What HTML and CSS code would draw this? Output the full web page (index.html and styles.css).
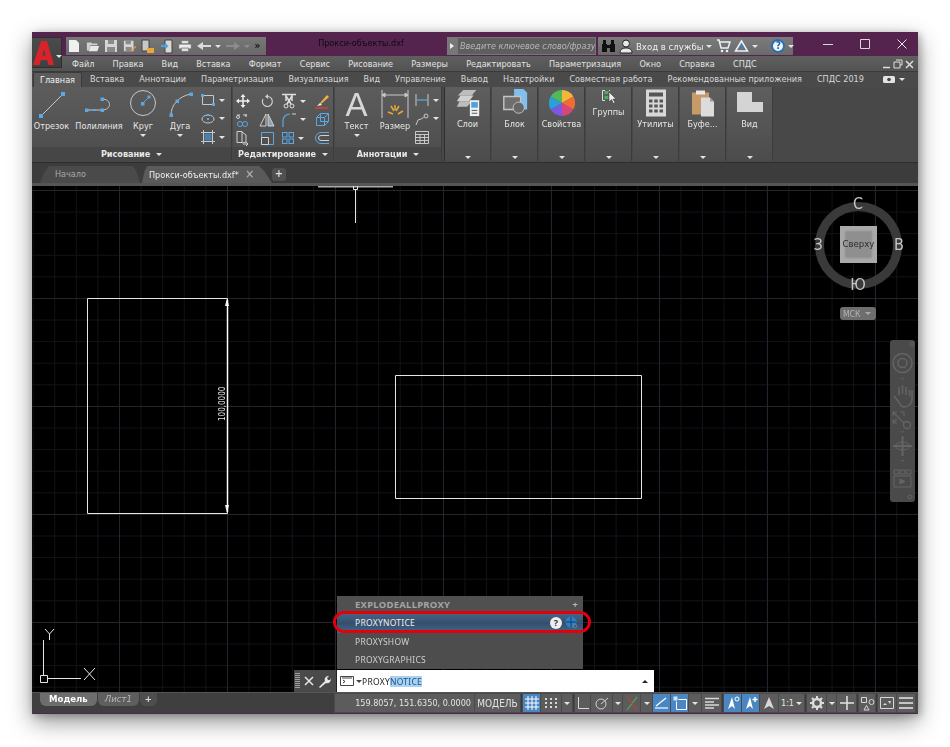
FILE: index.html
```html
<!DOCTYPE html>
<html lang="ru">
<head>
<meta charset="utf-8">
<title>Прокси-объекты.dxf</title>
<link rel="stylesheet" href="styles.css">
</head>
<body>
<div class="window">
  <header class="titlebar">
    <div class="logo">
      <svg width="22" height="26" viewBox="0 0 22 26"><path d="M0 25 L8 1 H14 L21 25 H15.5 L14 20 H8 L6.500 25 Z M9.500 15.500 H12.500 L11 9 Z" fill="#d8232a" fill-rule="evenodd"/></svg>
      <i class="caret caret-light"></i>
    </div>
    <div class="qat">
      <svg width="14" height="14" viewBox="0 0 14 14"><path d="M2 1h7l3 3v9H2z" fill="#f0f0f0"/></svg>
      <svg width="14" height="14" viewBox="0 0 16 14"><path d="M1 3h5l1 1h6v2H5L3 12H1z" fill="#cfcfcf"/><path d="M5 7h10l-2 6H3z" fill="#e8e8e8"/></svg>
      <svg width="14" height="14" viewBox="0 0 14 14"><path d="M1 1h12v12H1z" fill="#d5d5d5"/><path d="M4 1h6v4H4zM3 8h8v5H3z" fill="#8a8a8a"/></svg>
      <svg width="14" height="14" viewBox="0 0 16 14"><path d="M1 1h11v12H1z" fill="#d5d5d5"/><path d="M3 1h6v4H3zM3 8h7v5H3z" fill="#8a8a8a"/><path d="M9 12l5-5 1 1-5 5z" fill="#f0a030"/></svg>
      <svg width="14" height="15" viewBox="0 0 14 15"><path d="M1 1h7v11H1z" fill="#c8c8c8" stroke="#444"/><path d="M6 9h7v5H6z" fill="#e8a838"/></svg>
      <svg width="14" height="15" viewBox="0 0 14 15"><path d="M5 1h7v13H5z" fill="#d8d8d8" stroke="#444"/><path d="M1 7h6M5 5l2 2-2 2" stroke="#4ea1de" stroke-width="2" fill="none"/></svg>
      <svg width="14" height="14" viewBox="0 0 16 14"><path d="M4 1h8v3H4zM1 5h14v5H1zM4 9h8v4H4z" fill="#ececec" stroke="#666" stroke-width=".5"/></svg>
      <svg width="14" height="10" viewBox="0 0 14 10"><path d="M0 5l6-4v3h8v2H6v3z" fill="#dcdcdc"/></svg>
      <i class="caret caret-light"></i>
      <svg width="14" height="10" viewBox="0 0 14 10"><path d="M14 5L8 1v3H0v2h8v3z" fill="#8d8d8d"/></svg>
      <i class="caret caret-dim"></i>
      <span class="more">»</span>
    </div>
    <div class="doc-title">Прокси-объекты.dxf</div>
    <div class="search-arrow"><i class="tri-right"></i></div>
    <div class="search">Введите ключевое слово/фразу</div>
    <div class="tools">
      <svg width="15" height="14" viewBox="0 0 15 14"><path d="M1 5h5v8H1zM9 5h5v8H9zM2 1h3v4H2zM10 1h3v4h-3zM6 6h3v3H6z" fill="#111"/></svg>
      <svg width="14" height="15" viewBox="0 0 14 15"><circle cx="7" cy="4.500" r="3.500" fill="#e8e8e8" stroke="#222"/><path d="M1 14c0-4 3-5 6-5s6 1 6 5z" fill="#e8e8e8" stroke="#222"/></svg>
      <span class="login">Вход в службы</span><i class="caret caret-light"></i>
      <svg class="cart" width="15" height="14" viewBox="0 0 15 14"><path d="M1 1h2l2 8h7l2-6H4" fill="none" stroke="#e8f2fa" stroke-width="1.500"/><circle cx="6" cy="12" r="1.300" fill="#e8f2fa"/><circle cx="11" cy="12" r="1.300" fill="#e8f2fa"/></svg>
      <svg width="15" height="14" viewBox="0 0 15 14"><path d="M7.500 2L1.500 12h12z" fill="none" stroke="#eaf2fa" stroke-width="1.500"/><circle cx="7.500" cy="8" r="2" fill="#3f7fc0"/></svg>
      <i class="caret caret-light"></i>
      <span class="tools-sep"></span>
      <span class="help">?</span><i class="caret caret-light"></i>
    </div>
    <div class="winbtns">
      <svg width="12" height="12" viewBox="0 0 12 12"><path d="M1 6.500h10" stroke="#d8d8d8"/></svg>
      <svg width="12" height="12" viewBox="0 0 12 12"><path d="M1.500 1.500h9v9h-9z" fill="none" stroke="#d8d8d8" stroke-width="1"/></svg>
      <svg width="12" height="12" viewBox="0 0 12 12"><path d="M1.500 1.500l9 9M10.500 1.500l-9 9" stroke="#e8e8e8" stroke-width="1"/></svg>
    </div>
  </header>

  <nav class="menubar">
    <span>Файл</span><span>Правка</span><span>Вид</span><span>Вставка</span><span>Формат</span><span>Сервис</span><span>Рисование</span><span>Размеры</span><span>Редактировать</span><span>Параметризация</span><span>Окно</span><span>Справка</span><span>СПДС</span>
    <div class="mdi">
      <svg width="9" height="9" viewBox="0 0 9 9"><path d="M1 7.500h7" stroke="#ddd" stroke-width="1.500"/></svg>
      <svg width="10" height="10" viewBox="0 0 10 10"><path d="M3 1h6v5H7M1 3h6v6H1z" fill="none" stroke="#ddd"/></svg>
      <svg width="9" height="9" viewBox="0 0 9 9"><path d="M1 1l7 7M8 1L1 8" stroke="#ddd" stroke-width="1.500"/></svg>
    </div>
  </nav>

  <nav class="ribbon-tabs">
    <span class="rtab active">Главная</span><span class="rtab">Вставка</span><span class="rtab">Аннотации</span><span class="rtab">Параметризация</span><span class="rtab">Визуализация</span><span class="rtab">Вид</span><span class="rtab">Управление</span><span class="rtab">Вывод</span><span class="rtab">Надстройки</span><span class="rtab">Совместная работа</span><span class="rtab">Рекомендованные приложения</span><span class="rtab">СПДС 2019</span>
    <span class="rtab-opt"><svg width="12" height="7" viewBox="0 0 12 7"><rect width="12" height="7" rx="1.500" fill="#e4e4e4"/><circle cx="6" cy="3.500" r="1.800" fill="#444"/></svg><i class="caret caret-light"></i></span>
  </nav>

  <section class="ribbon">
    <div class="panel panel-draw">
      <div class="panel-body">
        <div class="big w-line">
          <svg width="38" height="34" viewBox="0 0 38 34"><path d="M8 27L30 5" stroke="#c8c8c8"/><rect x="6" y="25" width="4" height="4" fill="#5aa9e6"/><rect x="28" y="3" width="4" height="4" fill="#5aa9e6"/></svg>
          <span>Отрезок</span>
        </div>
        <div class="big w-pline">
          <svg width="40" height="34" viewBox="0 0 40 34"><path d="M8 21H23M23 10c10 0 10 11 0 11" fill="none" stroke="#c8c8c8"/><g fill="#5aa9e6"><rect x="6" y="19.500" width="3.500" height="3.500"/><rect x="14" y="20" width="3" height="2"/><rect x="21.500" y="19.500" width="3.500" height="3.500"/><rect x="21.500" y="8.500" width="3.500" height="3.500"/></g></svg>
          <span>Полилиния</span>
        </div>
        <div class="big w-circle">
          <svg width="30" height="34" viewBox="0 0 30 34"><circle cx="15" cy="14" r="12.500" fill="none" stroke="#c8c8c8"/><path d="M15 14l6-6" stroke="#5aa9e6"/><rect x="13" y="13" width="3.500" height="3.500" fill="#5aa9e6"/><rect x="19.500" y="6.500" width="3" height="3" fill="#5aa9e6"/></svg>
          <span>Круг</span><i class="caret caret-light"></i>
        </div>
        <div class="big w-arc">
          <svg width="30" height="34" viewBox="0 0 30 34"><path d="M6 26C6 16 14 7 26 5" fill="none" stroke="#c8c8c8"/><g fill="#5aa9e6"><rect x="4.500" y="24.500" width="3.500" height="3.500"/><rect x="10.500" y="10.500" width="3.500" height="3.500"/><rect x="24.500" y="3.500" width="3.500" height="3.500"/></g></svg>
          <span>Дуга</span><i class="caret caret-light"></i>
        </div>
        <div class="small-col">
          <div class="small"><svg width="14" height="14" viewBox="0 0 14 14"><path d="M1.500 2.500h11v9h-11z" fill="none" stroke="#c8c8c8"/><g fill="#5aa9e6"><rect y="1" width="3" height="3"/><rect x="11" y="10" width="3" height="3"/></g></svg><i class="caret caret-light"></i></div>
          <div class="small"><svg width="14" height="14" viewBox="0 0 14 14"><ellipse cx="7" cy="7" rx="6" ry="4" fill="none" stroke="#c8c8c8"/><rect x="6" y="6" width="2" height="2" fill="#5aa9e6"/><rect x="6" y="2" width="2" height="2" fill="#5aa9e6"/></svg><i class="caret caret-light"></i></div>
          <div class="small"><svg width="14" height="14" viewBox="0 0 14 14"><path d="M2.500 0v14M11.500 0v14M0 2.500h14M0 11.500h14" stroke="#c8c8c8"/><rect x="3.500" y="3.500" width="7" height="7" fill="#4b7fb0"/></svg><i class="caret caret-light"></i></div>
        </div>
      </div>
      <div class="panel-title">Рисование <i class="caret caret-light"></i></div>
    </div>

    <div class="panel panel-edit">
      <div class="panel-body edit-grid">
        <div class="cell"><svg width="14" height="14" viewBox="0 0 14 14"><path d="M7 0l2.500 3h-5zM7 14l2.500-3h-5zM0 7l3-2.500v5zM14 7l-3-2.500v5z" fill="#f0f0f0"/><path d="M7 2v10M2 7h10" stroke="#f0f0f0" stroke-width="1.500"/></svg></div>
        <div class="cell"><svg width="14" height="14" viewBox="0 0 14 14"><path d="M8 2.500a5 5 0 1 1-5 2.500" fill="none" stroke="#d0d0d0" stroke-width="1.200"/><path d="M8 0v5l-3-2.500z" fill="#d0d0d0"/></svg></div>
        <div class="cell cell-split"><svg width="16" height="16" viewBox="0 0 16 16"><path d="M1 1.500h14M5 1v7M11 1v7" stroke="#e0e0e0" stroke-width="1.500"/><path d="M5 3l5 8M11 3L6 11" stroke="#e0e0e0" stroke-width="1.500"/><circle cx="5" cy="13" r="2" fill="none" stroke="#e0e0e0"/><circle cx="11" cy="13" r="2" fill="none" stroke="#e0e0e0"/></svg><i class="caret caret-light"></i></div>
        <div class="cell"><svg width="16" height="16" viewBox="0 0 16 16"><path d="M6 10l7-8 2 2-8 7z" fill="#f2b04a"/><path d="M3 13l3-3 2 2z" fill="#f0f0f0"/><path d="M1 15h13" stroke="#e03c31" stroke-width="1.500"/></svg></div>

        <div class="cell"><svg width="16" height="16" viewBox="0 0 16 16"><circle cx="5" cy="12" r="2.500" fill="none" stroke="#5aa9e6"/><circle cx="10" cy="12" r="2.500" fill="none" stroke="#5aa9e6"/><path d="M2 3h3M8 3h4M11 2v3" stroke="#d0d0d0" stroke-width="1.200"/><circle cx="3" cy="5" r="1.500" fill="none" stroke="#d0d0d0"/></svg></div>
        <div class="cell"><svg width="16" height="14" viewBox="0 0 16 14"><path d="M7 1L1 13h6z" fill="none" stroke="#d0d0d0"/><path d="M9 1l6 12H9z" fill="#8ea2b4" stroke="#d0d0d0"/></svg></div>
        <div class="cell cell-split"><svg width="16" height="16" viewBox="0 0 16 16"><path d="M2 15V9c0-4 3-7 7-7" fill="none" stroke="#5aa9e6" stroke-width="1.200"/><path d="M11 2h4" stroke="#d0d0d0"/></svg><i class="caret caret-light"></i></div>
        <div class="cell"><svg width="15" height="15" viewBox="0 0 15 15"><path d="M1.500 5.500h8v8h-8zM5.500 1.500h8v8h-8z M1.500 5.500l4-4M9.500 5.500l4-4M9.500 13.500l4-4" fill="none" stroke="#5aa9e6"/></svg></div>

        <div class="cell"><svg width="16" height="16" viewBox="0 0 16 16"><path d="M2 1.500h5v11H2zM7 2l4 3v7l-4 1" fill="none" stroke="#d0d0d0"/><path d="M8 14h5M11 12l2 2-2 2" stroke="#d0d0d0" fill="none"/></svg></div>
        <div class="cell"><svg width="15" height="15" viewBox="0 0 15 15"><path d="M1.500 1.500h12v12h-12z" fill="none" stroke="#5aa9e6"/><path d="M1.500 6.500h7v7h-7z" fill="none" stroke="#d0d0d0"/></svg></div>
        <div class="cell cell-split"><svg width="14" height="14" viewBox="0 0 14 14"><g fill="none" stroke="#5aa9e6"><rect x="1.500" y="1.500" width="4.500" height="4.500"/><rect x="8" y="1.500" width="4.500" height="4.500"/><rect x="1.500" y="8" width="4.500" height="4.500"/><rect x="8" y="8" width="4.500" height="4.500"/></g></svg><i class="caret caret-light"></i></div>
        <div class="cell"><svg width="15" height="14" viewBox="0 0 15 14"><path d="M14 1.500H6a5.500 5.500 0 0 0 0 11h8" fill="none" stroke="#5aa9e6"/><path d="M14 4.500H6a2.500 2.500 0 0 0 0 5h8" fill="none" stroke="#d0d0d0"/></svg></div>
      </div>
      <div class="panel-title">Редактирование <i class="caret caret-light"></i></div>
    </div>

    <div class="panel panel-annot">
      <div class="panel-body">
        <div class="big w-text">
          <span class="big-a">A</span>
          <span>Текст</span><i class="caret caret-light"></i>
        </div>
        <div class="big w-dim">
          <svg width="30" height="34" viewBox="0 0 30 34"><path d="M2 1v28M28 1v28M2 6h26M2 6l3-2v4zM28 6l-3-2v4z" fill="#c8c8c8" stroke="#c8c8c8"/><path d="M8 23l5 2M11 17l3 5M19 17l-3 5M23 22l-5 3M15 16v5" stroke="#e8a838" stroke-width="1.500"/></svg>
          <span>Размер</span>
        </div>
        <div class="small-col annot-col">
          <div class="small"><svg width="14" height="14" viewBox="0 0 14 14"><path d="M1 1v12M13 1v12" stroke="#c8c8c8"/><path d="M1 7h12" stroke="#5aa9e6" stroke-width="1.200"/></svg><i class="caret caret-light"></i></div>
          <div class="small"><svg width="14" height="14" viewBox="0 0 14 14"><path d="M1 13l2-5 3-1c2-.5 2-2 4-3" fill="none" stroke="#c8c8c8"/><circle cx="11" cy="4" r="2" fill="none" stroke="#c8c8c8"/></svg><i class="caret caret-light"></i></div>
          <div class="small"><svg width="14" height="13" viewBox="0 0 14 13"><path d="M.5.500h13v12H.5zM.5 3.500h13M.5 6.500h13M.5 9.500h13M5 3.500v9M9.500 3.500v9" fill="none" stroke="#c8c8c8"/></svg></div>
        </div>
      </div>
      <div class="panel-title">Аннотации <i class="caret caret-light"></i></div>
    </div>

    <div class="tile w-layers">
      <svg width="24" height="30" viewBox="0 0 24 30"><path d="M7 1h14l-5 6H1z" fill="#bdbdbd"/><path d="M4 7h14l-5 6H0z" fill="#d0d0d0"/><path d="M3 13h13l-5 6H0z" fill="#bdbdbd"/><rect x="14" y="12" width="10" height="17" fill="#eee"/><rect x="15.500" y="14" width="7" height="6" fill="#4ea1de"/><path d="M16 23h6M16 26h6" stroke="#555"/></svg>
      <span>Слои</span><i class="caret caret-light"></i>
    </div>
    <div class="tile w-block">
      <svg width="26" height="30" viewBox="0 0 26 30"><path d="M12 0h10l4 4v18H12z" fill="#7fc0ee"/><path d="M1 8h18v14H1z" fill="#6e6e6e" stroke="#c4c4c4" stroke-width="1.500"/><circle cx="17" cy="20" r="6" fill="#666" stroke="#c4c4c4"/></svg>
      <span>Блок</span><i class="caret caret-light"></i>
    </div>
    <div class="tile w-props">
      <svg width="26" height="26" viewBox="-13 -13 26 26"><path d="M0 0V-13A13 13 0 0 1 11.300 -6.500z" fill="#f5b63a"/><path d="M0 0L11.300 -6.500A13 13 0 0 1 11.300 6.500z" fill="#ee6d32"/><path d="M0 0L11.300 6.500A13 13 0 0 1 0 13z" fill="#d8457b"/><path d="M0 0V13A13 13 0 0 1 -11.300 6.500z" fill="#7b58e0"/><path d="M0 0L-11.300 6.500A13 13 0 0 1 -11.300 -6.500z" fill="#2b9fd8"/><path d="M0 0L-11.300 -6.500A13 13 0 0 1 0 -13z" fill="#52b85a"/></svg>
      <span>Свойства</span><i class="caret caret-light"></i>
    </div>
    <div class="tile w-groups">
      <svg class="groups-ico" width="16" height="16" viewBox="0 0 16 16"><path d="M4 1.500H1.500v10H4M8 1.500h1" fill="none" stroke="#ddd"/><rect x="3.500" y="2" width="4" height="3" fill="#48b060"/><rect x="3.500" y="7" width="4" height="3" fill="#48b060"/><path d="M8 3v10l2.500-2.500 2 4 1.500-1-2-3.500h3z" fill="#eee" stroke="#333" stroke-width=".5"/></svg>
      <span>Группы</span><i class="caret caret-light"></i>
    </div>
    <div class="tile w-util">
      <svg width="20" height="27" viewBox="0 0 20 27"><rect width="20" height="27" fill="#d8d8d8"/><rect x="3" y="3" width="14" height="4" fill="#555"/><g fill="#555"><rect x="3" y="10" width="3.500" height="3"/><rect x="8.250" y="10" width="3.500" height="3"/><rect x="13.500" y="10" width="3.500" height="3"/><rect x="3" y="15" width="3.500" height="3"/><rect x="8.250" y="15" width="3.500" height="3"/><rect x="13.500" y="15" width="3.500" height="3"/><rect x="3" y="20" width="3.500" height="3"/><rect x="8.250" y="20" width="3.500" height="3"/><rect x="13.500" y="20" width="3.500" height="3"/></g></svg>
      <span>Утилиты</span><i class="caret caret-light"></i>
    </div>
    <div class="tile w-clip">
      <svg width="22" height="27" viewBox="0 0 22 27"><rect y="3" width="17" height="22" fill="#c79a6a"/><rect x="4" y="1" width="9" height="4" fill="#e8e8e8"/><path d="M9 8h9l4 4v15H9z" fill="#dcdcdc"/><path d="M18 8v4h4z" fill="#999"/></svg>
      <span>Буфе...</span><i class="caret caret-light"></i>
    </div>
    <div class="tile w-view">
      <svg width="26" height="22" viewBox="0 0 26 22"><path d="M0 0h15v10h11v10H0z" fill="#d4d4d4"/></svg>
      <span>Вид</span><i class="caret caret-light"></i>
    </div>
  </section>

  <div class="doc-tabs">
    <div class="dtab dtab-start">Начало</div>
    <div class="dtab dtab-active">Прокси-объекты.dxf* <span class="dtab-x">×</span></div>
    <div class="dtab-plus">+</div>
  </div>

  <main class="viewport">
    <svg class="drawing" width="886" height="506" viewBox="32 186 886 506">
      <g fill="none" stroke="#e6e6e6" stroke-width="1">
        <path d="M87.500 298.500h140v215h-140z"/>
        <path d="M395.500 375.500h246v123h-246z"/>
        <path d="M318 186.500h75" stroke-width="2" stroke="#aaa"/>
        <path d="M355.500 189v34"/>
        <path d="M353.500 185.500h4v4h-4z"/>
        <path d="M43.500 640v35M47 678.500h34"/>
        <path d="M40.500 675.500h7v7h-7z"/>
        <path d="M45 629l4.500 5 4.500-5M49.500 634v6"/>
        <path d="M84 668l11 12M95 668l-11 12"/>
      </g>
      <path d="M227 298l-2 8h4zM227 513l-2-8h4z" fill="#eee"/>
      <path d="M227.500 300v212" stroke="#fff" stroke-width="1.500"/>
      <text class="dim-text" transform="translate(225 421) rotate(-90)">100,0000</text>
    </svg>

    <div class="viewcube">
      <div class="vc-ring"></div>
      <div class="vc-face">Сверху</div>
      <span class="vc-l vc-n">С</span><span class="vc-l vc-s">Ю</span><span class="vc-l vc-w">З</span><span class="vc-l vc-e">В</span>
    </div>
    <div class="wcs">МСК <i class="caret caret-gray"></i></div>

    <div class="navbar">
      <svg width="25" height="162" viewBox="0 0 25 162" fill="none" stroke="#646464">
        <circle cx="22" cy="4" r="2"/>
        <circle cx="12.500" cy="23" r="9.500" stroke-width="1.500"/><circle cx="12.500" cy="23" r="4.500" stroke-width="1.500"/>
        <path d="M11 38l1.500 1.500L14 38" stroke-width="1"/>
        <path d="M4 56l4 5c2 3 3 6 6 6 5 0 8-4 8-8V50M9 55v-8M12.500 54v-9M16 55v-8M19.500 56v-6" stroke-width="1.500"/>
        <path d="M3 72l11 11M3 72h4M3 72v4M14 72h-4M14 72v4M3 83l4-4M3 83h4M3 83v-4" stroke-width="1.200"/><circle cx="17" cy="85" r="3.500" stroke-width="1.300"/>
        <path d="M11 91l1.500 1.500L14 91" stroke-width="1"/>
        <path d="M12.500 96v20M3 106h19" stroke-width="2"/><ellipse cx="12.500" cy="106" rx="7" ry="4"/>
        <path d="M11 120l1.500 1.500L14 120" stroke-width="1"/>
        <path d="M4 130h5v4H4zM10 130h5v4h-5zM16 130h5v4h-5zM4 136h17v11H4z"/><path d="M10 139l5 2.500-5 2.500z" fill="#646464"/>
        <circle cx="20" cy="157" r="2"/>
      </svg>
    </div>

    <div class="autocomplete">
      <div class="ac-row ac-head">EXPLODEALLPROXY <span class="ac-pin">+</span></div>
      <div class="ac-row ac-hot">PROXYNOTICE
        <span class="ac-icons"><span class="ac-q">?</span><svg width="14" height="14" viewBox="0 0 14 14"><circle cx="6" cy="6" r="5.500" fill="#2f7fc4"/><path d="M1 6h10M6 1v10" stroke="#17406a"/><circle cx="10" cy="10" r="2" fill="none" stroke="#6a7d8e"/></svg></span>
      </div>
      <div class="ac-row">PROXYSHOW</div>
      <div class="ac-row">PROXYGRAPHICS</div>
    </div>
    <div class="red-mark"></div>

    <div class="cmdline">
      <div class="cmd-tools">
        <span class="grip"></span>
        <svg width="10" height="10" viewBox="0 0 10 10"><path d="M1 1l8 8M9 1L1 9" stroke="#e8e8e8" stroke-width="1.500"/></svg>
        <svg width="13" height="13" viewBox="0 0 13 13"><path d="M1 12l6-6c-1-3 1-5 4-5l-2 2 1 2 2 0 1-2c0 4-2 6-5 5l-6 5z" fill="#e8e8e8"/></svg>
      </div>
      <div class="cmd-input">
        <svg width="14" height="10" viewBox="0 0 14 10"><path d="M.5.500h13v9H.5z" fill="none" stroke="#444"/><path d="M2 2h10" stroke="#444"/><path d="M3 4l2 1.500L3 7" fill="none" stroke="#333"/></svg>
        <i class="caret caret-dark"></i>
        <span class="cmd-text">PROXY<mark>NOTICE</mark></span>
        <i class="tri-up"></i>
      </div>
    </div>
  </main>

  <footer class="statusbar">
    <div class="layouts">
      <span class="ltab ltab-on">Модель</span><span class="ltab">Лист1</span><span class="ltab ltab-plus">+</span>
    </div>
    <div class="status">
      <span class="st coords">159.8057, 151.6350, 0.0000</span>
      <span class="st model">МОДЕЛЬ</span>
      <span class="st-gap"></span>
      <span class="st on w17"><svg width="14" height="14" viewBox="0 0 14 14"><path d="M0 3h14M0 7h14M0 11h14M3 0v14M7 0v14M11 0v14" stroke="#fff"/></svg></span>
      <span class="st w20"><svg width="14" height="14" viewBox="0 0 14 14"><g fill="#d8d8d8"><rect x="1" y="2" width="2" height="2"/><rect x="6" y="2" width="2" height="2"/><rect x="11" y="2" width="2" height="2"/><rect x="1" y="6" width="2" height="2"/><rect x="6" y="6" width="2" height="2"/><rect x="11" y="6" width="2" height="2"/><rect x="1" y="10" width="2" height="2"/><rect x="6" y="10" width="2" height="2"/><rect x="11" y="10" width="2" height="2"/></g></svg></span>
      <span class="st w10"><i class="caret caret-light"></i></span>
      <span class="st-gap"></span>
      <span class="st w15"><svg width="12" height="12" viewBox="0 0 12 12"><path d="M1.500 0v11.500H12" fill="none" stroke="#d8d8d8"/></svg></span>
      <span class="st w21"><svg width="14" height="14" viewBox="0 0 14 14"><circle cx="6" cy="8" r="5" fill="none" stroke="#d0d0d0"/><path d="M6 8l7-6" stroke="#d0d0d0"/></svg></span>
      <span class="st w9"><i class="caret caret-light"></i></span>
      <span class="st w17"><svg width="14" height="15" viewBox="0 0 14 15"><path d="M2 14L12 1" stroke="#5ca85c" stroke-width="1.200"/><path d="M2 1l10 13" stroke="#c04040" stroke-width="1.200"/></svg></span>
      <span class="st w11"><i class="caret caret-light"></i></span>
      <span class="st on w17"><svg width="14" height="12" viewBox="0 0 14 12"><path d="M1 9L11 1" stroke="#fff" stroke-width="1.200"/><path d="M0 11h13" stroke="#cfe4f7" stroke-width="1.500"/></svg></span>
      <span class="st on w17"><svg width="14" height="14" viewBox="0 0 14 14"><path d="M3.500 3.500h10v10h-10z" fill="none" stroke="#fff"/><rect width="5" height="5" fill="#cfe4f7" stroke="#4a86c2"/></svg></span>
      <span class="st w12"><i class="caret caret-light"></i></span>
      <span class="st w19"><svg width="14" height="12" viewBox="0 0 14 12"><path d="M0 1.500h14M0 5h9M0 8h14M0 11h9" stroke="#d8d8d8" stroke-width="1.500"/></svg></span>
      <span class="st-gap"></span>
      <span class="st on w17"><svg width="14" height="14" viewBox="0 0 14 14"><path d="M6 1L2 13l4-3 3 3z" fill="#fff"/><circle cx="11" cy="3" r="2" fill="none" stroke="#fff"/></svg></span>
      <span class="st on w17"><svg width="14" height="14" viewBox="0 0 14 14"><path d="M6 1L2 13l4-3 3 3z" fill="#fff"/><path d="M11 1v5M8.500 3.500h5" stroke="#fff" stroke-width="1.500"/></svg></span>
      <span class="st w18"><svg width="14" height="14" viewBox="0 0 14 14"><path d="M7 1L2 13l5-3 5 3z" fill="#d8d8d8"/></svg></span>
      <span class="st w25 scale">1:1<i class="caret caret-light"></i></span>
      <span class="st-gap"></span>
      <span class="st w19"><svg width="14" height="14" viewBox="0 0 14 14"><circle cx="7" cy="7" r="4" fill="none" stroke="#dcdcdc" stroke-width="2.500"/><path d="M7 0v3M7 11v3M0 7h3M11 7h3M2 2l2 2M10 10l2 2M12 2l-2 2M2 12l2-2" stroke="#dcdcdc" stroke-width="2"/></svg></span>
      <span class="st w9"><i class="caret caret-light"></i></span>
      <span class="st w19"><svg width="14" height="14" viewBox="0 0 14 14"><path d="M7 0v14M0 7h14" stroke="#e4e4e4" stroke-width="1.500"/></svg></span>
      <span class="st-gap"></span>
      <span class="st w16"><svg width="15" height="15" viewBox="0 0 15 15"><path d="M1.500 1.500h5v5h-5zM4 14l2.500-4.500L9 14z" fill="none" stroke="#d8d8d8"/><circle cx="11.500" cy="6" r="2.500" fill="none" stroke="#d8d8d8"/></svg></span>
      <span class="st-gap"></span>
      <span class="st w18"><svg width="14" height="12" viewBox="0 0 14 12"><path d="M.5.500h13v11H.5z" fill="none" stroke="#d8d8d8"/><path d="M3 8l2-2 2 2zM8 4l3 0-1 3z" fill="#d8d8d8"/></svg></span>
      <span class="st w18"><svg width="14" height="12" viewBox="0 0 14 12"><path d="M0 1h14M0 6h14M0 11h14" stroke="#e8e8e8" stroke-width="1.500"/></svg></span>
    </div>
  </footer>
</div>
</body>
</html>
```
FILE: styles.css
```css
* { box-sizing: border-box; }
html, body { margin: 0; padding: 0; background: #fff; }
body { width: 950px; height: 747px; overflow: hidden; font-family: "DejaVu Sans Condensed", "Liberation Sans", sans-serif; }
i { display: inline-block; font-style: normal; }
svg { display: block; flex: none; }

.window {
  position: relative;
  margin: 32px 0 0 32px;
  width: 886px;
  height: 682px;
  display: flex;
  flex-direction: column;
  box-shadow: 0 8px 22px rgba(0, 0, 0, .42), 2px 2px 8px rgba(0, 0, 0, .25);
  filter: blur(.3px);
}

.caret { width: 0; height: 0; flex: none; border-left: 3px solid transparent; border-right: 3px solid transparent; border-top: 3px solid #ddd; }
.caret-light { border-top-color: #e4e4e4; }
.caret-dim { border-top-color: #8d8d8d; }
.caret-dark { border-top-color: #444; }
.caret-gray { border-top-color: #aaa; }

/* title bar */
.titlebar { height: 24px; flex: none; background: #54244f; display: flex; align-items: flex-start; position: relative; }
.logo { position: absolute; left: 0; top: 5px; width: 30px; height: 31px; z-index: 3; background: linear-gradient(#4b4b4b, #3f3f3f); border: 1px solid #2e2e2e; border-left: 0; display: flex; align-items: center; padding-left: 1px; gap: 1px; }
.logo .caret { margin-top: 8px; }
.qat { margin: 5px 0 0 34px; width: 200px; flex: none; height: 18px; background: linear-gradient(#787878, #686868); display: flex; align-items: center; padding-left: 1px; gap: 4.500px; }
.qat .more { color: #111; font-size: 10px; line-height: 10px; font-weight: 700; }
.doc-title { width: 181px; flex: none; padding-left: 9px; text-align: center; color: #0c0c0c; font-size: 9px; line-height: 22px; }
.search-arrow { margin-top: 5px; width: 10px; flex: none; height: 18px; background: #777; display: flex; align-items: center; justify-content: center; }
.tri-right { width: 0; height: 0; border-top: 3px solid transparent; border-bottom: 3px solid transparent; border-left: 4px solid #eee; }
.search { margin-top: 5px; width: 139px; flex: none; height: 18px; background: #5e5e5e; border: 1px solid #777; color: #b8b8b8; font-style: italic; font-size: 9px; line-height: 16px; padding-left: 2px; white-space: nowrap; overflow: hidden; }
.tools { margin: 5px 0 0 2px; width: 195px; flex: none; height: 18px; background: linear-gradient(#7c7c7c, #6a6a6a); display: flex; align-items: center; padding-left: 3px; gap: 3px; }
.login { color: #f0f0f0; font-size: 9.500px; white-space: nowrap; }
.cart { margin-left: 1px; }
.tools-sep { width: 7px; flex: none; }
.help { width: 14px; height: 14px; flex: none; border-radius: 50%; background: #f4f4f4; border: 2px solid #2a6fb2; color: #1c5fa5; font-size: 10px; line-height: 10px; font-weight: 700; text-align: center; }
.winbtns { margin: 6px 0 0 29px; display: flex; gap: 25px; }

/* menu */
.menubar { height: 15px; flex: none; background: linear-gradient(#5f5f5f, #535353); padding-left: 40px; display: flex; align-items: center; gap: 18.200px; color: #e2e2e2; font-size: 9px; white-space: nowrap; position: relative; }
.mdi { position: absolute; right: 4px; top: 3px; display: flex; gap: 2px; align-items: center; }

/* ribbon tabs */
.ribbon-tabs { height: 16px; flex: none; background: #4a4a4a; padding-left: 1px; display: flex; align-items: flex-end; color: #d8d8d8; font-size: 9px; white-space: nowrap; border-top: 1px solid #3a3a3a; position: relative; }
.rtab { padding: 0 7px; margin-right: 1px; line-height: 14px; height: 15px; }
.rtab.active { padding: 0 6px; background: #5b5b5b; color: #f2f2f2; border: 1px solid #3b3b3b; border-bottom: 0; border-radius: 2px 2px 0 0; }
.rtab-opt { position: absolute; right: 13px; top: 4px; display: flex; align-items: center; gap: 4px; }

/* ribbon */
.ribbon { height: 76px; flex: none; background: #484848; display: flex; gap: 1px; padding-bottom: 1px; color: #e6e6e6; font-size: 9px; border-bottom: 1px solid #2e2e2e; }
.panel { display: flex; flex-direction: column; flex: none; background: linear-gradient(#5c5c5c, #4c4c4c); border-right: 1px solid #3c3c3c; }
.panel-draw { width: 200px; }
.panel-edit { width: 101px; }
.panel-annot { width: 107px; }
.panel-body { flex: 1; display: flex; min-height: 0; }
.panel-title { height: 14px; flex: none; background: #464646; text-align: center; line-height: 14px; color: #e8e8e8; font-weight: 600; font-size: 9px; }
.panel-title .caret { margin-left: 3px; vertical-align: 1px; }

.big { display: flex; flex-direction: column; align-items: center; padding-top: 2px; white-space: nowrap; line-height: 11px; flex: none; }
.big svg { margin-bottom: -4px; }
.big span { margin-top: 2px; }
.big .caret { margin-top: 2px; }
.w-line { width: 39px; }
.w-pline { width: 56px; }
.w-circle { width: 32px; }
.w-arc { width: 42px; }
.w-text { width: 43px; }
.w-dim { width: 34px; }
.big .big-a { font-size: 33px; height: 30px; line-height: 31px; margin: 0; color: #d6d6d6; font-family: "Liberation Sans", sans-serif; }

.small-col { display: flex; flex-direction: column; padding-top: 6px; gap: 4px; }
.small { height: 14.500px; display: flex; align-items: center; gap: 4px; }
.annot-col { padding-left: 3px; }

.edit-grid { display: grid; grid-template-columns: 20px 28px 30px 22px; grid-auto-rows: 18.500px; padding-top: 5px; }
.cell { display: flex; align-items: center; justify-content: center; }
.cell-split { justify-content: flex-start; gap: 3px; }

.tile { width: 46px; flex: none; background: linear-gradient(#5e5e5e, #4c4c4c); border-right: 1px solid #3c3c3c; display: flex; flex-direction: column; align-items: center; padding-top: 2px; white-space: nowrap; position: relative; font-size: 9px; line-height: 12px; }
.tile svg { height: 28px; }
.tile span { margin-top: 1px; }
.tile .caret { position: absolute; bottom: 2px; left: 50%; margin-left: -3px; border-left-width: 3.500px; border-right-width: 3.500px; border-top-width: 3.500px; }
.w-layers { margin-left: 1px; width: 47px; border-left: 1px solid #2e2e2e; }
.w-groups .groups-ico { height: 16px; }
.w-groups span { margin-top: 1px; }

/* document tabs */
.doc-tabs { height: 23px; flex: none; background: #3c3c3c; border-bottom: 3px solid #555; display: flex; align-items: flex-end; padding-left: 8px; font-size: 9px; white-space: nowrap; }
.dtab { height: 17px; line-height: 16px; border-radius: 6px 6px 0 0; }
.dtab-start { width: 100px; background: #4a4a4a; color: #a8a8a8; padding-left: 15px; clip-path: polygon(0 100%, 4% 40%, 9% 0, 93% 0, 97% 40%, 100% 100%); }
.dtab-active { width: 130px; margin-left: 2px; background: #5a5a5a; color: #f0f0f0; padding-left: 7px; clip-path: polygon(0 100%, 2% 30%, 4% 0, 90% 0, 94% 30%, 100% 100%); }
.dtab-x { color: #aaa; font-size: 12px; margin-left: 4px; font-weight: 700; }
.dtab-plus { margin: 0 0 2px 0; width: 14px; height: 13px; line-height: 12px; text-align: center; background: #505050; border-radius: 3px; color: #ddd; font-size: 11px; font-weight: 700; }

/* viewport */
.viewport {
  flex: 1;
  position: relative;
  background-color: #000;
  background-image:
    linear-gradient(to right, #24242c 1px, transparent 1px),
    linear-gradient(to bottom, #24242c 1px, transparent 1px),
    linear-gradient(to right, #12121a 1px, transparent 1px),
    linear-gradient(to bottom, #12121a 1px, transparent 1px);
  background-size: 108px 100%, 100% 108px, 21.600px 100%, 100% 21.600px;
  background-position: 87px 0, 0 4px, 0.600px 0, 0 4px;
  overflow: hidden;
}
.drawing { position: absolute; left: 0; top: 0; }
.dim-text { fill: #e6e6e6; font-size: 8px; font-family: "DejaVu Sans Condensed", "Liberation Sans", sans-serif; }

.viewcube { position: absolute; left: 783px; top: 16px; width: 87px; height: 87px; }
.vc-ring { position: absolute; inset: 0; border: 9px solid #3a3a3a; border-radius: 50%; }
.vc-face { position: absolute; left: 25px; top: 24px; width: 37px; height: 37px; background: #8f8f8f; box-shadow: inset 0 0 2px 5px #a9a9a9; color: #2c2c2c; font-size: 9.500px; line-height: 36px; text-align: center; white-space: nowrap; }
.vc-l { position: absolute; color: #c6c6c6; font-size: 16px; line-height: 16px; width: 18px; text-align: center; }
.vc-n { left: 34px; top: -6px; }
.vc-s { left: 34px; top: 75px; }
.vc-w { left: -6px; top: 35px; }
.vc-e { left: 75px; top: 35px; }
.wcs { position: absolute; left: 808px; top: 121px; width: 36px; height: 13px; border-radius: 3px; background: #6e6e6e; color: #b4b4b4; font-size: 8.500px; line-height: 12px; padding-left: 3px; display: flex; align-items: center; gap: 5px; }
.navbar { position: absolute; left: 858px; top: 154px; width: 25px; height: 162px; background: #4a4a4a; border-radius: 3px; }

.autocomplete { position: absolute; left: 305px; top: 410px; width: 246px; background: #4d4d4d; color: #d0d0d0; font-family: "Noto Sans", sans-serif; font-size: 8.500px; letter-spacing: .25px; }
.ac-row { height: 18.300px; line-height: 18px; padding-left: 18px; display: flex; align-items: center; position: relative; }
.ac-head { color: #a4a4a4; font-weight: 700; font-size: 9.500px; background: #505050; }
.ac-pin { position: absolute; right: 5px; font-size: 9px; color: #bbb; }
.ac-hot { background: linear-gradient(#49617f, #34506f 50%, #4a6585); color: #f0f0f0; }
.ac-icons { position: absolute; right: 4px; top: 2px; display: flex; gap: 3px; align-items: center; }
.ac-q { width: 12px; height: 12px; background: #eee; color: #333; border-radius: 50%; font-size: 9px; font-weight: 700; line-height: 12px; text-align: center; }
.red-mark { position: absolute; left: 301px; top: 425px; width: 258px; height: 22px; border: 3.500px solid #e2000c; border-radius: 11px; }

.cmdline { position: absolute; left: 262px; top: 484px; width: 360px; height: 22px; display: flex; }
.cmd-tools { width: 43px; background: #4a4a4a; border-right: 1px solid #222; display: flex; align-items: center; gap: 4px; padding-left: 1px; }
.grip { width: 5px; height: 16px; background-image: repeating-linear-gradient(#a0a0a0 0 1px, transparent 1px 2px); }
.cmd-input { flex: 1; background: #fff; display: flex; align-items: center; padding: 0 6px 0 3px; gap: 2px; color: #222; font-family: "Noto Sans", sans-serif; font-size: 8.500px; letter-spacing: .25px; }
.cmd-text { flex: 1; margin-left: -2px; }
mark { background: #a9d1f2; color: #1d4f86; }
.tri-up { width: 0; height: 0; border-left: 3px solid transparent; border-right: 3px solid transparent; border-bottom: 3px solid #222; }

/* status bar */
.statusbar { height: 22px; flex: none; background: #3f3f3f; border-bottom: 1px solid #54244f; display: flex; border-top: 1px solid #555; }
.layouts { width: 302px; flex: none; display: flex; align-items: flex-start; padding-left: 8px; gap: 1px; font-size: 9.500px; }
.ltab { height: 13px; line-height: 12px; padding: 0 7px; border-radius: 0 0 6px 6px; background: #5e5e5e; color: #b8b8b8; font-style: italic; }
.ltab-on { background: #6d6d6d; color: #fff; font-weight: 700; font-style: normal; padding: 0 9px; }
.ltab-plus { background: #4e4e4e; font-style: normal; font-weight: 700; padding: 0 5px; color: #ddd; }
.status { flex: 1; min-width: 0; background: #4a4a4a; display: flex; align-items: stretch; color: #e4e4e4; font-size: 9.500px; white-space: nowrap; padding: 1px 2px 1px 1px; gap: 1px; }
.st { background: #5c5c5c; display: flex; align-items: center; justify-content: center; flex: none; }
.coords { width: 139px; justify-content: flex-end; padding-right: 3px; font-size: 9px; }
.model { width: 45px; font-size: 10px; }
.on { background: #4a86c2; }
.w9 { width: 9px; }
.w10 { width: 10px; }
.w11 { width: 11px; }
.w12 { width: 12px; }
.w15 { width: 15px; }
.w16 { width: 16px; }
.w17 { width: 17px; }
.w18 { width: 18px; }
.w19 { width: 19px; }
.w20 { width: 20px; }
.w21 { width: 21px; }
.w25 { width: 25px; }
.scale { gap: 2px; font-size: 9px; }
.st-gap { width: 1px; flex: none; background: #3a3a3a; }
```
